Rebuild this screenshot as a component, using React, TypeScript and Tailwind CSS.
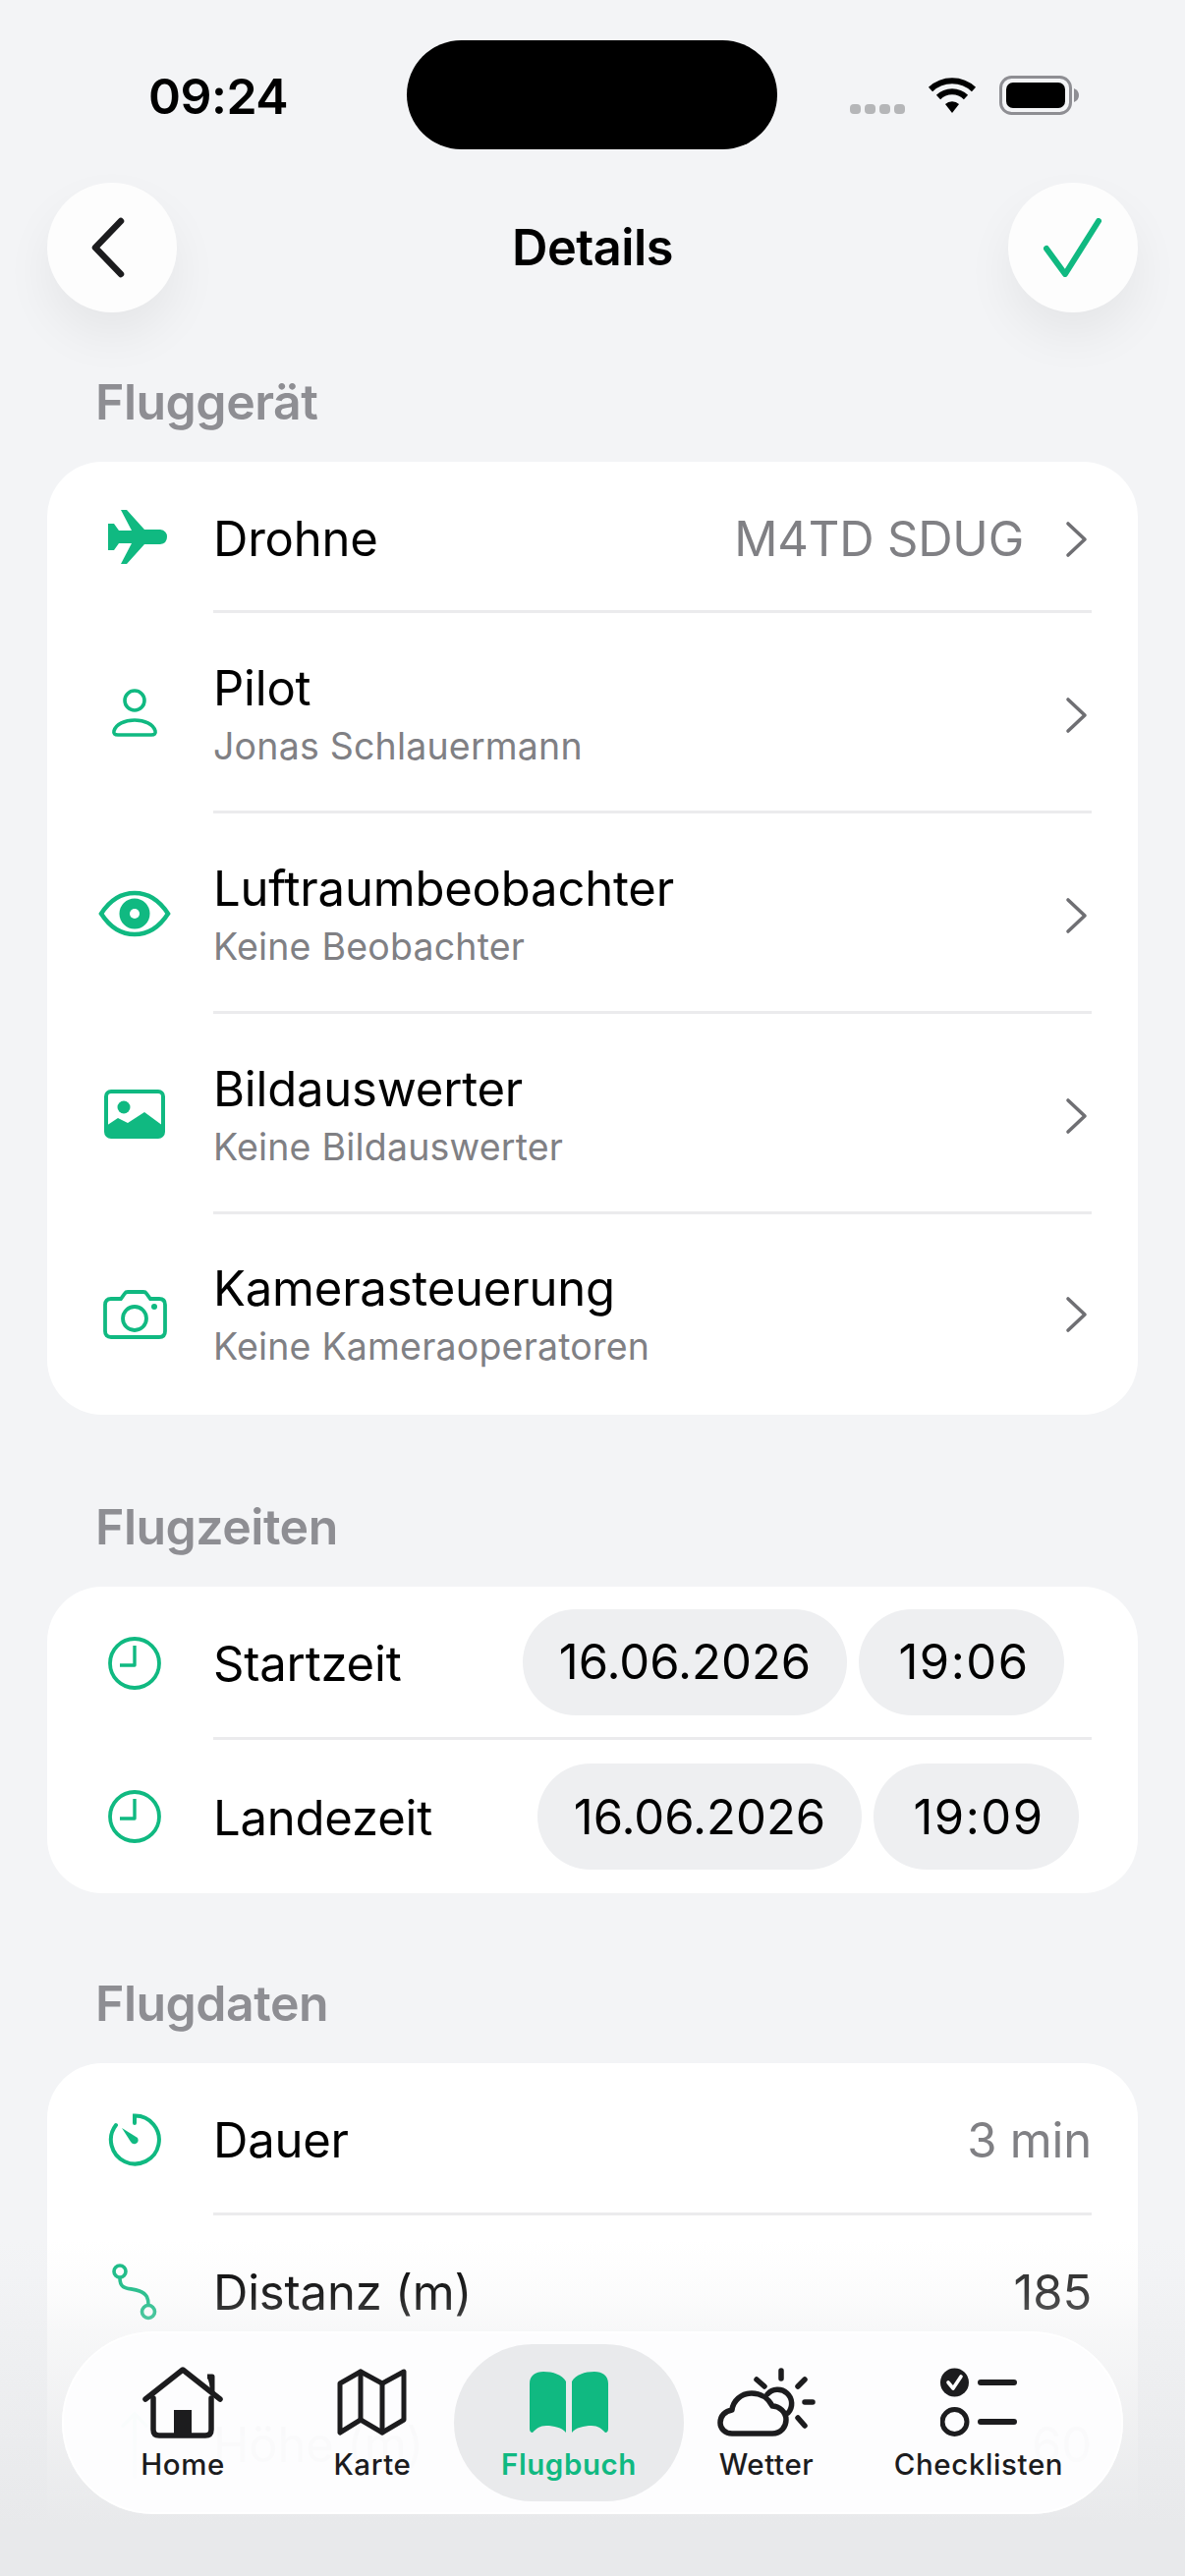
import React from "react";

const G = "#10b981";
const D = "#1c1c1e";

function Chevron() {
  return (
    <svg width="26" height="38" viewBox="0 0 26 38" fill="none" className="shrink-0">
      <path d="M4 3 L21 19 L4 35" stroke="#6f6f73" strokeWidth="3.6" strokeLinecap="round" strokeLinejoin="round" />
    </svg>
  );
}

const Plane = () => (
  <svg width="60" height="56" viewBox="0 0 60 56" className="ml-[5px]">
    <path fill={G} d="M0 14 L6 14 L11 21 L24 21 L13 0 L19 0 L37 20 L53 20 Q60 21 60 27.5 Q60 34 53 35 L37 35 L19 55 L13 55 L24 34 L11 34 L6 41 L0 41 Z" />
  </svg>
);
const Person = () => (
  <svg width="48" height="50" viewBox="0 0 48 50" fill="none" stroke={G} strokeWidth="3.6">
    <circle cx="24" cy="12" r="10" />
    <path d="M7 47 H41 Q46 47 45 43 C43 36 34 32 24 32 C14 32 5 36 3 43 Q2 47 7 47 Z" />
  </svg>
);
const Eye = () => (
  <svg width="74" height="48" viewBox="0 0 74 48">
    <path fill="none" stroke={G} strokeWidth="4.5" d="M3 24 C12 10 24 3 37 3 C50 3 62 10 71 24 C62 38 50 45 37 45 C24 45 12 38 3 24Z" />
    <circle cx="37" cy="24" r="15.5" fill={G} />
    <circle cx="37" cy="24" r="5" fill="#fff" />
  </svg>
);
const ImageIcon = () => (
  <svg width="62" height="50" viewBox="0 0 62 50" fill="none">
    <rect x="2" y="2" width="58" height="46" rx="5" stroke={G} strokeWidth="4" />
    <circle cx="20" cy="18" r="6.5" fill={G} />
    <path fill={G} d="M2 37 L14 29 L24 34 L41 23 L60 37 V43 Q60 48 55 48 H7 Q2 48 2 43 Z" />
  </svg>
);
const Camera = () => (
  <svg width="65" height="50" viewBox="0 0 65 50" fill="none" stroke={G} strokeWidth="3.8">
    <path d="M8 9 H18 L22 3.5 Q23 2 25 2 H41 Q43 2 44 3.5 L48 9 H57 Q63 9 63 15 V42 Q63 48 57 48 H8 Q2 48 2 42 V15 Q2 9 8 9Z" />
    <circle cx="32" cy="29" r="12" />
    <circle cx="52" cy="17" r="3" fill={G} stroke="none" />
  </svg>
);
const Clock = () => (
  <svg width="54" height="54" viewBox="0 0 54 54" fill="none" stroke={G}>
    <circle cx="27" cy="27" r="25" strokeWidth="3.8" />
    <path d="M27 9 V29 H12" strokeWidth="3.4" strokeLinejoin="round" />
  </svg>
);
const Timer = () => (
  <svg width="54" height="54" viewBox="0 0 54 54" fill="none">
    <path d="M27 10 V2.5 A24.5 24.5 0 1 1 8 12" stroke={G} strokeWidth="4" strokeLinecap="round" />
    <path fill={G} d="M14 15 L30 25 Q32 29 28 31 Q25 32 23 29 Z" />
  </svg>
);
const Route = () => (
  <svg width="46" height="58" viewBox="0 0 46 58" fill="none" stroke={G} strokeWidth="3.6">
    <circle cx="8" cy="8" r="6" />
    <circle cx="37" cy="49" r="6.5" />
    <path d="M8 15 C8 28 18 24 28 28 C36 31 37 36 37 42" strokeLinecap="round" />
  </svg>
);
const HeightIcon = () => (
  <svg width="40" height="70" viewBox="0 0 40 70" fill="none" stroke={G} strokeWidth="3.6">
    <path d="M20 68 V4 M8 16 L20 4 L32 16" strokeLinecap="round" />
  </svg>
);

const Home = () => (
  <svg width="82" height="73" viewBox="0 0 82 73" fill="none" stroke={D} strokeWidth="5.5" strokeLinecap="round" strokeLinejoin="round">
    <path d="M3 33 L41 3 L79 33" />
    <path d="M11 32 V64 Q11 70 17 70 H64 Q70 70 70 64 V32" />
    <path d="M66 10 H71 V28" strokeWidth="5" strokeLinecap="butt" fill={D} />
    <rect x="32" y="44" width="18" height="26" fill={D} stroke="none" />
  </svg>
);
const MapIcon = () => (
  <svg width="72" height="68" viewBox="0 0 72 68" fill="none" stroke={D} strokeWidth="5" strokeLinecap="round" strokeLinejoin="round">
    <path d="M3 15 L24 3 L46 15 L68 3 V52 L46 65 L24 52 L3 65 Z" />
    <path d="M24 3 V52 M46 15 V65" />
  </svg>
);
const Book = () => (
  <svg width="80" height="63" viewBox="0 0 80 63" fill={G}>
    <path d="M0 12 C0 4 6 0 14 0 C24 0 33 3 37 10 V62 C33 57 25 55 17 55 C10 55 7 58 3 62 Q0 62 0 58Z" />
    <path d="M80 12 C80 4 74 0 66 0 C56 0 47 3 43 10 V62 C47 57 55 55 63 55 C70 55 73 58 77 62 Q80 62 80 58Z" />
  </svg>
);
const Weather = () => (
  <svg width="100" height="71" viewBox="0 0 100 71" fill="none" stroke={D} strokeWidth="5.5" strokeLinecap="round" strokeLinejoin="round">
    <path d="M15 67 H56 C65 67 70 60 70 53 C70 45 63 39 56 39 C52 31 44 26 35 26 C24 26 16 34 15 43 C8 44 3 49 3 56 C3 62 8 67 15 67Z" />
    <path d="M51 27 A14 14 0 1 1 72 46" />
    <path d="M65 3 V11 M40 12 L48 19 M89 12 L82 19 M89 35 H97 M82 51 L89 59" />
  </svg>
);
const Checks = () => (
  <svg width="78" height="70" viewBox="0 0 78 70" fill="none">
    <circle cx="14.5" cy="15" r="14.5" fill={D} />
    <path d="M8 15 L13 21 L21 9" stroke="#fff" strokeWidth="3.6" strokeLinecap="round" strokeLinejoin="round" />
    <circle cx="14.5" cy="55" r="12.5" stroke={D} strokeWidth="5" />
    <path d="M41 15 H75 M41 55 H75" stroke={D} strokeWidth="6" strokeLinecap="round" />
  </svg>
);

function Label({ children, className = "" }: { children: React.ReactNode; className?: string }) {
  return <div className={`pl-[97px] text-[50px] leading-[60px] font-semibold text-[#8e8e93] tracking-[-0.5px] ${className}`}>{children}</div>;
}

function IconSlot({ children }: { children: React.ReactNode }) {
  return <div className="ml-[29px] mr-[20px] w-[120px] shrink-0 flex items-center justify-center">{children}</div>;
}

function Row({ icon, title, sub, value, chevron, strong, last, h }: { icon: React.ReactNode; title: string; sub?: string; value?: string; chevron?: boolean; strong?: boolean; last?: boolean; h: string }) {
  return (
    <div className={`flex ${h}`}>
      <IconSlot>{icon}</IconSlot>
      <div className={`flex-1 min-w-0 mr-[47px] flex items-center ${last ? "" : "pt-[6px] border-b-[3px] border-[#ebebed]"}`}>
        <div className="flex-1 min-w-0">
          <div className="text-[49px] leading-[58px] text-black tracking-[-0.2px]">{title}</div>
          {sub && <div className="text-[37.5px] leading-[46px] text-[#808084] mt-[7px] tracking-[0.2px]">{sub}</div>}
        </div>
        {value && <div className={`text-[49px] tracking-[-0.2px] ${strong ? "text-[#222]" : "text-[#808084]"}`}>{value}</div>}
        {chevron && <div className="ml-[41px] mr-[2px]"><Chevron /></div>}
      </div>
    </div>
  );
}

function Pill({ children, w, wide }: { children: string; w: string; wide?: boolean }) {
  return <div className={`h-[108px] ${w} rounded-[54px] bg-[#eeeff1] flex items-center justify-center text-[49px] text-black ${wide ? "tracking-[1.5px] pl-[5px]" : ""}`}><span className="mt-[1px]">{children}</span></div>;
}

function TimeRow({ title, date, time, pr, last }: { title: string; date: string; time: string; pr: string; last?: boolean }) {
  return (
    <div className="flex h-[156px]">
      <IconSlot><Clock /></IconSlot>
      <div className={`flex-1 mr-[47px] flex items-center ${pr} ${last ? "" : "border-b-[3px] border-[#ebebed]"}`}>
        <div className="flex-1 mt-[4px] text-[49px] text-black tracking-[-0.2px]">{title}</div>
        <div className="flex gap-[12px]">
          <Pill w="w-[330px]">{date}</Pill>
          <Pill w="w-[209px]" wide>{time}</Pill>
        </div>
      </div>
    </div>
  );
}

function Tab({ icon, label, w, active, ml = "" }: { icon: React.ReactNode; label: string; w: string; active?: boolean; ml?: string }) {
  return (
    <div className={`${w} ${ml} h-[160px] rounded-[80px] flex flex-col items-center shrink-0 ${active ? "bg-[#e9eaec]" : ""}`}>
      <div className="h-[72px] mt-[23px] flex items-center justify-center">{icon}</div>
      <div className={`mt-[9px] text-[29.5px] leading-[36px] tracking-[0.6px] ${active ? "text-[#10b981] font-semibold" : "text-[#1c1c1e] font-medium"}`}>{label}</div>
    </div>
  );
}

export default function App() {
  return (
    <div className="relative w-[1206px] h-[2622px] overflow-hidden bg-[#f3f4f6] font-['Inter','Liberation_Sans',sans-serif]">
      <div className="flex items-center h-[111px] mt-[41px] pt-[41px]">
        <div className="w-[414px] pl-[151px] -mt-[39px] text-[50px] font-semibold text-black tracking-[-0.5px] leading-none">09:24</div>
        <div className="w-[377px] h-[111px] -mt-[41px] rounded-[56px] bg-black shrink-0" />
        <div className="flex-1 flex items-center pl-[74px] -mt-[40px]">
          <div className="flex gap-[4px] mt-[28px]">
            {[0, 1, 2, 3].map((i) => (
              <div key={i} className="w-[11px] h-[10px] rounded-[4px] bg-[#b5b6b8]" />
            ))}
          </div>
          <svg width="50" height="38" viewBox="0 0 50 38" fill="none" className="ml-[23px]" stroke="#000" strokeWidth="6">
            <path d="M3 13 A32 32 0 0 1 47 13" />
            <path d="M11 21 A20 20 0 0 1 39 21" />
            <path d="M18 28 A10 10 0 0 1 32 28 L25 37 Z" fill="#000" stroke="none" />
          </svg>
          <svg width="81" height="40" viewBox="0 0 81 40" fill="none" className="ml-[23px]">
            <rect x="1.5" y="1.5" width="71" height="37" rx="11" stroke="#8e8e93" strokeWidth="3" />
            <rect x="7" y="7" width="60" height="26" rx="7" fill="#000" />
            <path d="M76 13 Q81 15 81 20 Q81 25 76 27 Z" fill="#8e8e93" />
          </svg>
        </div>
      </div>

      <div className="mt-[34px] px-[48px] flex items-center justify-between">
        <div className="w-[132px] h-[132px] rounded-full bg-[#fdfdfd] shadow-[0_24px_50px_rgba(0,0,0,0.06)] flex items-center justify-center">
          <svg width="40" height="62" viewBox="0 0 40 62" fill="none" className="-ml-[8px]">
            <path d="M33 4 L7 31 L33 58" stroke={D} strokeWidth="6.5" strokeLinecap="round" strokeLinejoin="round" />
          </svg>
        </div>
        <div className="text-[50.5px] font-semibold text-black tracking-[-0.5px]">Details</div>
        <div className="w-[132px] h-[132px] rounded-full bg-[#fdfdfd] shadow-[0_24px_50px_rgba(0,0,0,0.06)] flex items-center justify-center">
          <svg width="60" height="60" viewBox="0 0 60 60" fill="none">
            <path d="M3 31 L22 57 L56 3" stroke={G} strokeWidth="6" strokeLinecap="round" strokeLinejoin="round" />
          </svg>
        </div>
      </div>

      <Label className="mt-[61px]">Fluggerät</Label>
      <div className="mt-[31px] mx-[48px] rounded-[56px] bg-white overflow-hidden">
        <Row h="h-[154px]" icon={<Plane />} title="Drohne" value="M4TD SDUG" chevron />
        <Row h="h-[204px]" icon={<Person />} title="Pilot" sub="Jonas Schlauermann" chevron />
        <Row h="h-[204px]" icon={<Eye />} title="Luftraumbeobachter" sub="Keine Beobachter" chevron />
        <Row h="h-[204px]" icon={<ImageIcon />} title="Bildauswerter" sub="Keine Bildauswerter" chevron />
        <Row h="h-[204px]" icon={<Camera />} title="Kamerasteuerung" sub="Keine Kameraoperatoren" chevron last />
      </div>

      <Label className="mt-[84px]">Flugzeiten</Label>
      <div className="mt-[31px] mx-[48px] rounded-[56px] bg-white overflow-hidden">
        <TimeRow title="Startzeit" date="16.06.2026" time="19:06" pr="pr-[28px]" />
        <TimeRow title="Landezeit" date="16.06.2026" time="19:09" pr="pr-[13px]" last />
      </div>

      <Label className="mt-[82px]">Flugdaten</Label>
      <div className="mt-[31px] mx-[48px] rounded-t-[56px] bg-white overflow-hidden">
        <Row h="h-[155px]" icon={<Timer />} title="Dauer" value="3 min" />
        <Row h="h-[155px]" icon={<Route />} title="Distanz (m)" value="185" strong />
        <Row h="h-[155px]" icon={<HeightIcon />} title="Höhe (m)" value="60" strong />
      </div>

      <div className="absolute left-0 right-0 top-[2280px] bottom-0 bg-[linear-gradient(to_bottom,rgba(232,233,235,0)_0px,rgba(232,233,235,0.15)_56px,rgba(232,233,235,0.35)_93px,rgba(232,233,235,1)_290px)]" />

      <div className="absolute left-[63px] top-[2373px] w-[1080px] h-[186px] rounded-[93px] bg-[#fdfdfe]/96 shadow-[inset_0_0_0_2px_rgba(255,255,255,0.7)] flex items-center pl-[23px]">
        <Tab w="w-[200px]" icon={<Home />} label="Home" />
        <Tab w="w-[166px]" ml="ml-[10px]" icon={<MapIcon />} label="Karte" />
        <Tab w="w-[234px]" icon={<Book />} label="Flugbuch" active />
        <Tab w="w-[168px]" icon={<Weather />} label="Wetter" />
        <Tab w="w-[264px]" icon={<Checks />} label="Checklisten" />
      </div>
    </div>
  );
}
